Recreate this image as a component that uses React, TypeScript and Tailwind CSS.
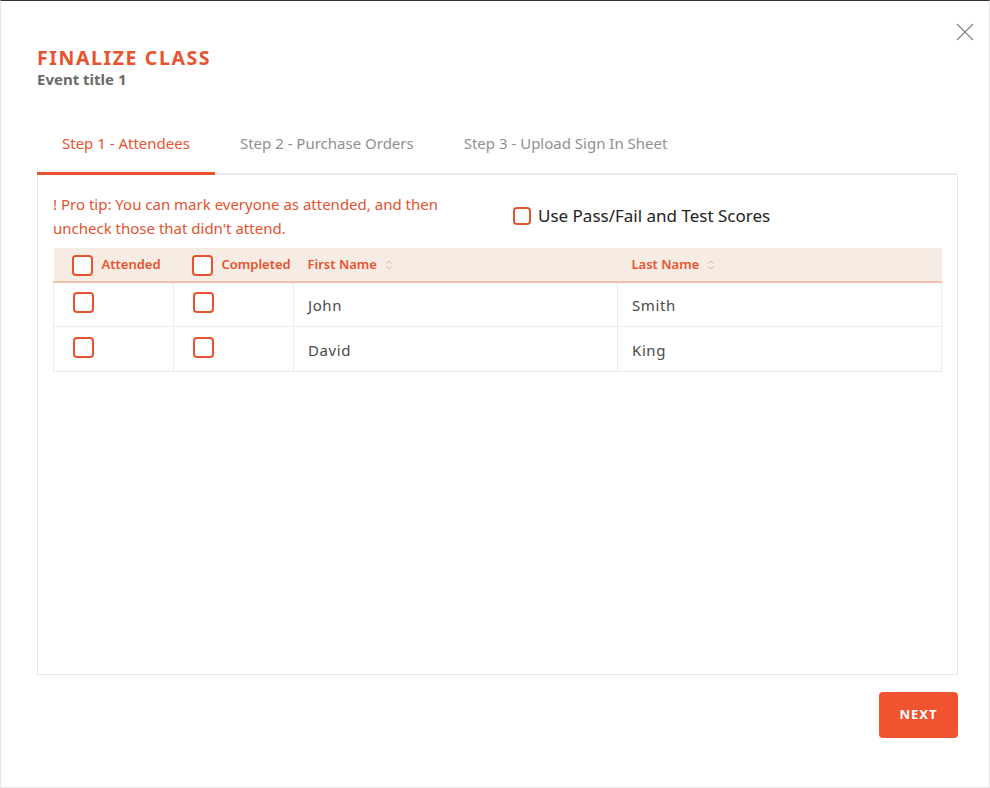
import { useState } from "react";

const font = { fontFamily: '"Noto Sans", "DejaVu Sans", sans-serif' };

const attendees = [
  { id: 1, first: "John", last: "Smith" },
  { id: 2, first: "David", last: "King" },
];

function Box({ size = "w-5 h-5" }: { size?: string }) {
  return (
    <span
      className={`inline-block ${size} rounded-[4px] border-2 border-[#e8532f] bg-white shrink-0`}
    />
  );
}

function SortIcon() {
  return (
    <svg width="8" height="12" viewBox="0 0 8 12" className="ml-2" fill="none">
      <path d="M1.5 4.5 4 2l2.5 2.5M1.5 7.5 4 10l2.5-2.5" stroke="#c9b6aa" strokeWidth="1" />
    </svg>
  );
}

export default function App() {
  const [tab] = useState(0);
  const tabs = ["Step 1 - Attendees", "Step 2 - Purchase Orders", "Step 3 - Upload Sign In Sheet"];

  return (
    <div className="w-[990px] h-[788px] bg-white border-t border-t-[#333] border-x border-x-[#e6e6e6] border-b border-b-[#e6e6e6] relative" style={font}>
      <button className="absolute top-[22px] right-[15px] w-[18px] h-[18px]">
        <svg viewBox="0 0 18 18" width="18" height="18">
          <path d="M1 1l16 16M17 1 1 17" stroke="#8a8a8a" strokeWidth="1.4" />
        </svg>
      </button>

      <div className="pl-[36px] pr-[31px] pt-[46px]">
        <h1 className="text-[19.5px] leading-[22px] font-bold tracking-[1.6px] text-[#e8532f]">FINALIZE CLASS</h1>
        <div className="text-[15px] leading-[20px] font-bold text-[#6b6b6b]">Event title 1</div>

        <div className="mt-[33px] flex border-b-2 border-[#ececec]">
          {tabs.map((t, i) => (
            <div
              key={t}
              className={`px-[25px] pt-[10px] pb-[17px] text-[15px] -mb-[2px] border-b-[3px] ${
                i === tab ? "text-[#e8532f] border-[#e8532f]" : "text-[#909090] border-transparent"
              }`}
            >
              {t}
            </div>
          ))}
        </div>

        <div className="h-[500px] border border-t-0 border-[#e8e8e8] px-[15px] pt-[17px]">
          <div className="flex items-start">
            <p className="w-[400px] text-[15px] leading-[24px] text-[#e2532f]">
              ! Pro tip: You can mark everyone as attended, and then uncheck those that didn't attend.
            </p>
            <label className="ml-[60px] mt-[14px] flex items-center gap-[7px] text-[17px] leading-[20px] text-[#222]">
              <Box size="w-[18px] h-[18px]" />
              Use Pass/Fail and Test Scores
            </label>
          </div>

          <table className="mt-[8px] w-[888px] border-collapse table-fixed text-[15px]">
            <colgroup>
              <col className="w-[120px]" />
              <col className="w-[120px]" />
              <col className="w-[324px]" />
              <col className="w-[324px]" />
            </colgroup>
            <thead>
              <tr className="bg-[#f6ece4] h-[34px] border-b-2 border-[#f2c2ac]">
                <th className="pl-[18px] pt-[2px] text-left">
                  <span className="flex items-center gap-[9px] text-[13px] font-semibold text-[#e8532f]">
                    <Box size="w-[21px] h-[21px]" /> Attended
                  </span>
                </th>
                <th className="pl-[18px] pt-[2px] text-left">
                  <span className="flex items-center gap-[9px] text-[13px] font-semibold text-[#e8532f]">
                    <Box size="w-[21px] h-[21px]" /> Completed
                  </span>
                </th>
                <th className="pl-[14px] pt-[2px] text-left">
                  <span className="flex items-center text-[13px] font-semibold text-[#e8532f]">
                    First Name <SortIcon />
                  </span>
                </th>
                <th className="pl-[14px] pt-[2px] text-left">
                  <span className="flex items-center text-[13px] font-semibold text-[#e8532f]">
                    Last Name <SortIcon />
                  </span>
                </th>
              </tr>
            </thead>
            <tbody>
              {attendees.map((a) => (
                <tr key={a.id} className="h-[45px] text-[#4a4a4a]">
                  <td className="border border-[#ececec] pl-[19px] pt-[2px]">
                    <Box size="w-[21px] h-[21px]" />
                  </td>
                  <td className="border border-[#ececec] pl-[19px] pt-[2px]">
                    <Box size="w-[21px] h-[21px]" />
                  </td>
                  <td className="border border-[#ececec] pl-[14px] pt-[2px] tracking-[0.6px]">{a.first}</td>
                  <td className="border border-[#ececec] pl-[14px] pt-[2px] tracking-[0.6px]">{a.last}</td>
                </tr>
              ))}
            </tbody>
          </table>
        </div>

        <div className="flex justify-end mt-[17px]">
          <button className="w-[79px] h-[46px] rounded-[4px] bg-[#f0532f] text-white text-[13px] font-bold tracking-[1px]">
            NEXT
          </button>
        </div>
      </div>
    </div>
  );
}
